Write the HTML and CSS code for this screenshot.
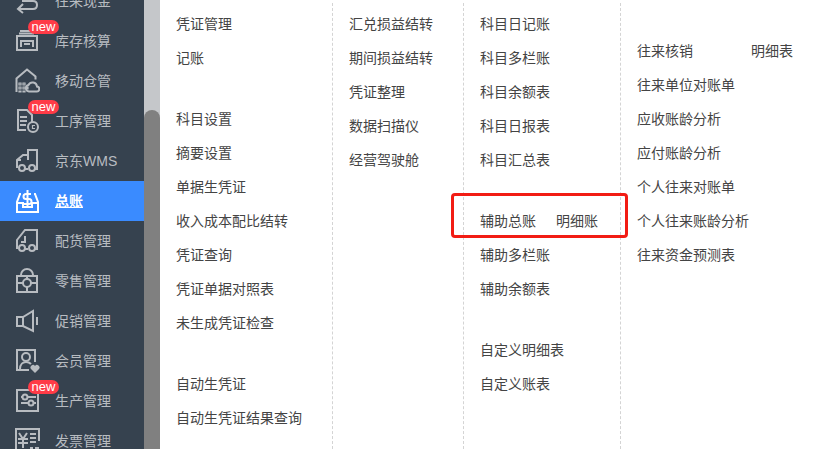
FILE: index.html
```html
<!DOCTYPE html>
<html lang="en">
<head>
    <meta charset="UTF-8">
    <meta name="viewport" content="width=device-width, initial-scale=1.0">
    <title>总账</title>
    <link rel="stylesheet" href="styles.css">
</head>
<body>
    <div class="app">
        <div class="sidebar">
            <div class="nav-list">
                <a class="nav-item">
                    <svg class="icon" viewBox="0 0 26 26"><path d="M4 21h15q4 0 4-4t-4-4H8M9 16l-5 5 5 4"/></svg>
                    <span>往来现金</span>
                </a>
                <a class="nav-item">
                    <svg class="icon" viewBox="0 0 26 26"><path d="M6 3h13M5 5.500h15M3 8h20v14H3zM7 19v-6h12v6M10 16h6"/></svg>
                    <span>库存核算</span>
                    <i class="badge">new</i>
                </a>
                <a class="nav-item">
                    <svg class="icon" viewBox="0 0 26 26"><path d="M2.500 24V10.500L13 1.500l8.500 7v3"/><path class="thin" d="M5 15h2v2H5zM9 15h2v2H9zM5 19h2v2H5zM9 19h2v2H9zM13 19h1v2h-1zM5 23h2v1H5zM9 23h2v1H9z"/><path d="M15 23.500h7.500a2.500 2.500 0 0 0 .5-5 4.500 4.500 0 0 0-8.500-1.500 3.300 3.300 0 0 0 .5 6.500z"/></svg>
                    <span>移动仓管</span>
                </a>
                <a class="nav-item">
                    <svg class="icon" viewBox="0 0 26 26"><path d="M12 22H4V2h9l5 5v7M6 9h7M6 13h7M6 17h6"/><circle cx="19" cy="19" r="5"/><path class="thin" d="M21 17.500h-2.500v3H21"/></svg>
                    <span>工序管理</span>
                    <i class="badge">new</i>
                </a>
                <a class="nav-item">
                    <svg class="icon" viewBox="0 0 26 26"><path d="M14 12V2h9v19h-2M3 20v-8l6-5h5M11 21h3M3 12h4"/><circle cx="8" cy="20" r="3"/><circle cx="18" cy="20" r="3"/></svg>
                    <span>京东WMS</span>
                </a>
                <a class="nav-item active">
                    <svg class="icon" viewBox="0 0 26 26"><path d="M7 6H6L3 14v10h21V14l-3-8h-1M3 15h6v4h9v-4h6"/><path d="M17 6h-5a2.500 2.500 0 0 0 0 5h3a2.500 2.500 0 0 1 0 5h-5M13.500 2v17"/></svg>
                    <span>总账</span>
                </a>
                <a class="nav-item">
                    <svg class="icon" viewBox="0 0 26 26"><path d="M3 21v-9l8-10h12v19h-2M11 21h3M11 8v6H7"/><circle cx="8" cy="20" r="3"/><circle cx="18" cy="20" r="3"/></svg>
                    <span>配货管理</span>
                </a>
                <a class="nav-item">
                    <svg class="icon" viewBox="0 0 26 26"><path d="M7 8V7a6 6 0 0 1 12 0v1M3 8h20v16H3zM3 15h6M17 15h6M13 8v3M13 19v5"/><circle cx="13" cy="15" r="4"/></svg>
                    <span>零售管理</span>
                </a>
                <a class="nav-item">
                    <svg class="icon" viewBox="0 0 26 26"><path d="M3 9h6l10-6v20l-10-5H3zM9 9v9M23 9v8"/></svg>
                    <span>促销管理</span>
                </a>
                <a class="nav-item">
                    <svg class="icon" viewBox="0 0 26 26"><path d="M21 14V2H3v20h12"/><circle cx="12" cy="9" r="4"/><path d="M6 21c0-5 3-7 6-7 2 0 4 1 5 2"/><path class="solid" d="M21 25l-4-4a2.400 2.400 0 0 1 4-3 2.400 2.400 0 0 1 4 3z"/></svg>
                    <span>会员管理</span>
                </a>
                <a class="nav-item">
                    <svg class="icon" viewBox="0 0 26 26"><path d="M3 2h21v21H3zM7 9h15M7 15h15"/><circle class="fill-bg" cx="11" cy="9" r="2.500"/><circle class="fill-bg" cx="17" cy="15" r="2.500"/></svg>
                    <span>生产管理</span>
                    <i class="badge">new</i>
                </a>
                <a class="nav-item">
                    <svg class="icon" viewBox="0 0 26 26"><path d="M2 25V1h23v12M5 5l4 6 4-6M4 11h10M4 15h10M9 11v9M16 6h6M16 10h6M16 14h6M16 20h3M21 20h4"/></svg>
                    <span>发票管理</span>
                </a>
            </div>
        </div>
        <div class="scrollbar"><div class="scrollbar-thumb"></div></div>

        <div class="menu">
            <div class="menu-col col-a">
                <div class="menu-group">
                    <div class="menu-row"><a>凭证管理</a></div>
                    <div class="menu-row"><a>记账</a></div>
                </div>
                <div class="menu-group">
                    <div class="menu-row"><a>科目设置</a></div>
                    <div class="menu-row"><a>摘要设置</a></div>
                    <div class="menu-row"><a>单据生凭证</a></div>
                    <div class="menu-row"><a>收入成本配比结转</a></div>
                    <div class="menu-row"><a>凭证查询</a></div>
                    <div class="menu-row"><a>凭证单据对照表</a></div>
                    <div class="menu-row"><a>未生成凭证检查</a></div>
                </div>
                <div class="menu-group">
                    <div class="menu-row"><a>自动生凭证</a></div>
                    <div class="menu-row"><a>自动生凭证结果查询</a></div>
                </div>
            </div>
            <div class="menu-col col-b">
                <div class="menu-group">
                    <div class="menu-row"><a>汇兑损益结转</a></div>
                    <div class="menu-row"><a>期间损益结转</a></div>
                    <div class="menu-row"><a>凭证整理</a></div>
                    <div class="menu-row"><a>数据扫描仪</a></div>
                    <div class="menu-row"><a>经营驾驶舱</a></div>
                </div>
            </div>
            <div class="menu-col col-c">
                <div class="menu-group">
                    <div class="menu-row"><a>科目日记账</a></div>
                    <div class="menu-row"><a>科目多栏账</a></div>
                    <div class="menu-row"><a>科目余额表</a></div>
                    <div class="menu-row"><a>科目日报表</a></div>
                    <div class="menu-row"><a>科目汇总表</a></div>
                </div>
                <div class="menu-group">
                    <div class="menu-row"><a class="first">辅助总账</a><a>明细账</a></div>
                    <div class="menu-row"><a>辅助多栏账</a></div>
                    <div class="menu-row"><a>辅助余额表</a></div>
                </div>
                <div class="menu-group">
                    <div class="menu-row"><a>自定义明细表</a></div>
                    <div class="menu-row"><a>自定义账表</a></div>
                </div>
            </div>
            <div class="menu-col col-d">
                <div class="menu-group">
                    <div class="menu-row"><a class="first">往来核销</a><a>明细表</a></div>
                    <div class="menu-row"><a>往来单位对账单</a></div>
                    <div class="menu-row"><a>应收账龄分析</a></div>
                    <div class="menu-row"><a>应付账龄分析</a></div>
                    <div class="menu-row"><a>个人往来对账单</a></div>
                    <div class="menu-row"><a>个人往来账龄分析</a></div>
                    <div class="menu-row"><a>往来资金预测表</a></div>
                </div>
            </div>
            <div class="highlight-box"></div>
        </div>
    </div>
</body>
</html>
```

FILE: styles.css
```css
* {
    margin: 0;
    padding: 0;
    box-sizing: border-box;
    font-family: "Liberation Sans", "Noto Sans CJK SC", sans-serif;
}

html, body {
    height: 100%;
    overflow: hidden;
    background-color: white;
}

.app {
    display: flex;
    height: 449px;
    overflow: hidden;
}

.sidebar {
    width: 144px;
    flex-shrink: 0;
    background-color: #36424f;
    overflow: hidden;
}

.nav-list {
    margin-top: -19px;
}

.nav-item {
    position: relative;
    display: flex;
    align-items: center;
    height: 40px;
    padding-left: 14px;
    gap: 15px;
    font-size: 14px;
    color: #b8bcc1;
}

.nav-item span {
    padding-bottom: 2px;
}

.nav-item.active {
    background-color: #3a8bff;
    color: white;
    font-weight: bold;
}

.nav-item.active span {
    text-decoration: underline;
}

.icon {
    width: 26px;
    height: 26px;
    flex-shrink: 0;
    fill: none;
    stroke: currentColor;
    stroke-width: 2;
}

.icon .thin {
    stroke-width: 1.2;
}

.icon .solid {
    fill: currentColor;
    stroke: none;
}

.icon .fill-bg {
    fill: #36424f;
}

.badge {
    position: absolute;
    left: 28px;
    top: -1px;
    width: 31px;
    height: 14px;
    border-radius: 7px;
    background-color: #ff3b47;
    color: white;
    font-style: normal;
    font-size: 13px;
    line-height: 13px;
    text-align: center;
}

.scrollbar {
    width: 16px;
    flex-shrink: 0;
    padding-top: 110px;
    background-color: #c5c7ca;
}

.scrollbar-thumb {
    height: 100%;
    background-color: #808080;
    border-radius: 8px 8px 0 0;
}

.menu {
    position: relative;
    flex: 1;
    display: flex;
    align-items: stretch;
    padding-top: 3px;
    font-size: 14px;
    color: #444;
}

.menu-col {
    padding: 3px 0 0 16px;
    border-right: 1px dashed #d4d4d4;
}

.col-a { width: 173px; }
.col-b { width: 131px; }
.col-c { width: 157px; }

.col-d {
    flex: 1;
    padding-top: 30px;
    border-right: none;
}

.menu-group + .menu-group {
    margin-top: 27px;
}

.menu-row {
    display: flex;
    height: 34px;
    align-items: center;
}

.col-c .first { width: 76px; }
.col-d .first { width: 114px; }

.highlight-box {
    position: absolute;
    left: 291px;
    top: 193px;
    width: 177px;
    height: 45px;
    border: 3px solid #f21c14;
    border-radius: 4px;
}
```
